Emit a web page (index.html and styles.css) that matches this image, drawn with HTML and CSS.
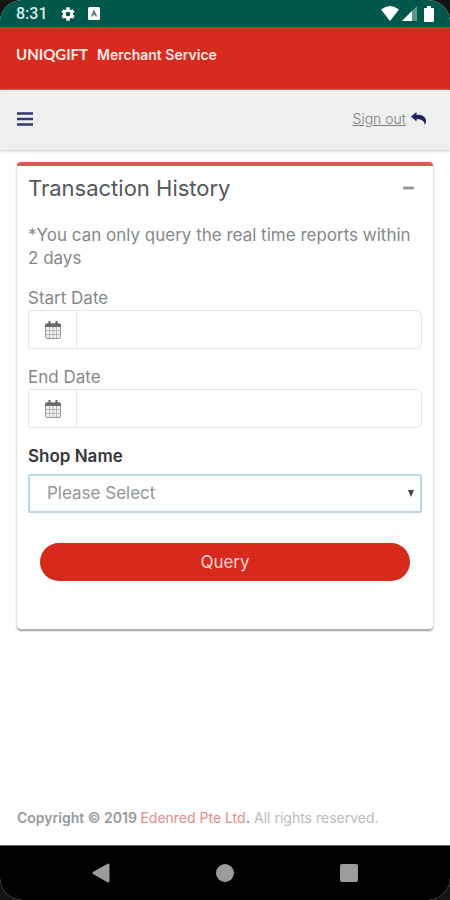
FILE: index.html
```html
<!DOCTYPE html>
<html lang="en">
<head>
<meta charset="utf-8">
<meta name="viewport" content="width=device-width, initial-scale=1">
<title>Transaction History</title>
<link rel="stylesheet" href="styles.css">
</head>
<body>
<div class="screen">
  <div class="status">
    <span class="clock">8:31</span>
    <svg class="gear" width="16" height="16" viewBox="0 0 24 24" aria-hidden="true"><path fill="#fff" d="M19.4 13a7.500 7.500 0 0 0 0-2l2.100-1.600a.5.5 0 0 0 .1-.6l-2-3.500a.5.5 0 0 0-.6-.2l-2.500 1a7.300 7.300 0 0 0-1.700-1l-.4-2.700a.5.5 0 0 0-.5-.4h-4a.5.5 0 0 0-.5.4L9.200 5.100a7.700 7.700 0 0 0-1.700 1L5 5.100a.5.5 0 0 0-.6.2l-2 3.500a.5.5 0 0 0 .1.600L4.600 11a8 8 0 0 0 0 2l-2.100 1.600a.5.5 0 0 0-.1.600l2 3.500c.1.200.4.300.6.200l2.500-1a7.300 7.300 0 0 0 1.700 1l.4 2.700c0 .2.200.4.500.4h4c.2 0 .5-.2.500-.4l.4-2.700a7.700 7.700 0 0 0 1.700-1l2.500 1c.2.100.5 0 .6-.2l2-3.500a.5.5 0 0 0-.1-.6zM12 15.500a3.500 3.500 0 1 1 0-7 3.500 3.500 0 0 1 0 7z"/></svg>
    <svg class="app" width="12" height="13" viewBox="0 0 12 13" aria-hidden="true"><rect width="12" height="13" rx="1.500" fill="#fff"/><path d="M3.500 9.500 6 4l2.500 5.500M4.500 7.500h3" fill="none" stroke="#4b8178" stroke-width="1.400"/></svg>
    <svg class="wifi" width="18" height="15" viewBox="0 0 18 15" aria-hidden="true"><path fill="#fff" d="M0 3.500Q9-3.500 18 3.500L9 15z"/></svg>
    <svg class="signal" width="15" height="15" viewBox="0 0 15 15" aria-hidden="true"><path fill="#5d958b" d="M0 15 15 0v15z"/><path fill="#fff" d="M0 15 10 5v10z"/></svg>
    <svg class="battery" width="10" height="16" viewBox="0 0 10 16" aria-hidden="true"><path fill="#fff" d="M3 0h4v2h2q1 0 1 1v12q0 1-1 1H1q-1 0-1-1V3q0-1 1-1h2z"/></svg>
  </div>
  <header class="brand">
    <span class="logo">UNIQGIFT</span>
    <span class="service">Merchant Service</span>
  </header>
  <nav class="toolbar">
    <button class="menu" type="button" aria-label="Menu"><svg width="16" height="14" viewBox="0 0 16 14"><path stroke="#35356d" stroke-width="2.400" d="M0 1.500h16M0 7h16M0 12.500h16"/></svg></button>
    <a class="signout" href="#"><span class="signout-text">Sign out</span><svg width="15" height="13" viewBox="0 0 15 13" aria-hidden="true"><path fill="#20205f" d="M0 4.500 5.500 0v2.700C11 2.700 15 4.500 15 9q0 2-1.500 4c.3-4-2.500-5.800-8-5.800V9.500z"/></svg></a>
  </nav>
  <main class="content">
    <section class="card">
      <div class="card-head">
        <h1 class="title">Transaction History</h1>
        <button class="collapse" type="button" aria-label="Collapse"><svg width="11" height="4" viewBox="0 0 11 4"><rect width="11" height="3" y=".5" rx="1" fill="#96999f"/></svg></button>
      </div>
      <form class="form">
        <p class="note">*You can only query the real time reports within 2 days</p>
        <div class="field">
          <label class="label" for="start">Start Date</label>
          <div class="group">
            <span class="addon"><svg width="16" height="18" viewBox="0 0 16 18" aria-hidden="true"><rect x=".5" y="3" width="15" height="14.500" rx="1.500" fill="#f1f1f1" stroke="#999"/><path fill="#6b6b6b" d="M0 6V4q0-1.500 1.500-1.500h13Q16 2.500 16 4v2z"/><path stroke="#b5b5b5" d="M4.500 6v11M8 6v11M11.500 6v11M1 9.500h14M1 13.500h14"/><path stroke="#666" stroke-width="2" d="M4.500 0v4M11.500 0v4"/></svg></span>
            <input class="date" id="start" type="text">
          </div>
        </div>
        <div class="field">
          <label class="label" for="end">End Date</label>
          <div class="group">
            <span class="addon"><svg width="16" height="18" viewBox="0 0 16 18" aria-hidden="true"><rect x=".5" y="3" width="15" height="14.500" rx="1.500" fill="#f1f1f1" stroke="#999"/><path fill="#6b6b6b" d="M0 6V4q0-1.500 1.500-1.500h13Q16 2.500 16 4v2z"/><path stroke="#b5b5b5" d="M4.500 6v11M8 6v11M11.500 6v11M1 9.500h14M1 13.500h14"/><path stroke="#666" stroke-width="2" d="M4.500 0v4M11.500 0v4"/></svg></span>
            <input class="date" id="end" type="text">
          </div>
        </div>
        <div class="field">
          <label class="label label-strong" for="shop">Shop Name</label>
          <div class="select-wrap">
            <select class="select" id="shop"><option>Please Select</option></select>
            <svg class="caret" width="6" height="7" viewBox="0 0 6 7" aria-hidden="true"><path fill="#444" d="M0 0h6L3 7z"/></svg>
          </div>
        </div>
        <div class="actions"><button class="query" type="submit">Query</button></div>
      </form>
    </section>
  </main>
  <footer class="footer"><strong class="copy">Copyright © 2019 <a class="company" href="#">Edenred Pte Ltd</a>.</strong> All rights reserved.</footer>
  <div class="navbar">
    <button class="nav" type="button" aria-label="Back"><svg width="18" height="20" viewBox="0 0 18 20"><path fill="#9c9c9c" d="M1 9 15.500.8Q17.500 0 17.500 2v16q0 2-2 1.200L1 11q-1.500-1 0-2z"/></svg></button>
    <button class="nav" type="button" aria-label="Home"><svg width="18" height="18" viewBox="0 0 18 18"><circle cx="9" cy="9" r="9" fill="#9c9c9c"/></svg></button>
    <button class="nav" type="button" aria-label="Recent"><svg width="18" height="18" viewBox="0 0 18 18"><rect width="18" height="18" rx="2" fill="#9c9c9c"/></svg></button>
  </div>
</div>
</body>
</html>
```
FILE: styles.css
```css
* { box-sizing: border-box; }
body { margin: 0; background: #141414; font-family: Inter, "Liberation Sans", sans-serif; color: #85878a; }
button { padding: 0; border: 0; background: none; font: inherit; cursor: pointer; }
svg { display: block; flex: none; }
.screen { display: flex; flex-direction: column; min-height: 100vh; background: #fff; border-radius: 22px; overflow: hidden; }
.status { display: flex; align-items: center; height: 27px; padding: 0 16px; background: #00574b; color: #dcebe8; }
.clock { font: 500 16px Roboto, sans-serif; }
.gear { margin-left: 12px; }
.app { margin-left: 12px; }
.wifi { margin-left: auto; }
.signal { margin-left: 3px; }
.battery { margin-left: 7px; }
.brand { display: flex; align-items: center; gap: 9px; height: 63px; padding: 0 16px 8px; background: #d62b1f; border-bottom: 1px solid #c9543f; color: #ffe9e5; }
.logo { font: 700 15px Lato, sans-serif; }
.service { font-size: 14px; font-weight: 600; }
.toolbar { display: flex; align-items: center; justify-content: space-between; height: 60px; padding: 0 24px 3px 17px; background: #efefef; box-shadow: 0 1px 3px #c4c4c4; }
.signout { display: flex; align-items: center; gap: 5px; color: #7d7f86; font-size: 14px; font-weight: 300; text-decoration: none; }
.signout-text { text-decoration: underline; }
.content { flex: 1; padding: 12px 17px 0; }
.card { border-top: 4px solid #d65c54; border-radius: 4px; background: #fff; box-shadow: 0 0 3px #ddd, 0 2px 2px #949494; }
.card-head { display: flex; align-items: center; justify-content: space-between; height: 44px; padding: 0 19px 0 11px; border-bottom: 1px solid #fafafa; }
.title { margin: 0; font-size: 22px; font-weight: 400; color: #55575a; }
.form { padding: 14px 11px 48px; font-size: 17px; line-height: 23px; }
.note { margin: 0 0 17px; }
.field { margin-bottom: 17px; }
.label { display: block; }
.label-strong { margin-bottom: 6px; font-weight: 600; color: #36383a; }
.group { display: flex; height: 39px; border: 1px solid #e5e5e8; border-radius: 2px 6px 6px 2px; }
.addon { display: flex; align-items: center; justify-content: center; width: 48px; border-right: 1px solid #e5e5e8; }
.date { flex: 1; min-width: 0; padding: 0 12px; border: 0; background: none; font: inherit; outline: 0; }
.select-wrap { position: relative; }
.select { display: block; width: 100%; height: 39px; padding: 0 17px; border: 2px solid #bdd6e6; border-radius: 2px; background: #fff; color: #929497; font: inherit; appearance: none; }
.caret { position: absolute; right: 8px; top: 16px; pointer-events: none; }
.actions { padding: 13px 12px 0; }
.query { display: block; width: 100%; height: 38px; border-radius: 19px; background: #d7291c; color: #fbd5d0; }
.footer { padding: 0 17px 18px; font-size: 14px; line-height: 18px; color: #b9babd; }
.copy { font-weight: 600; color: #96989b; }
.company { font-weight: 400; color: #e58b89; text-decoration: none; }
.navbar { display: grid; grid-template-columns: repeat(3, 124px); justify-content: center; align-items: center; height: 55px; background: #000; border-top: 1px solid #666; }
.nav { display: flex; justify-content: center; }
```
